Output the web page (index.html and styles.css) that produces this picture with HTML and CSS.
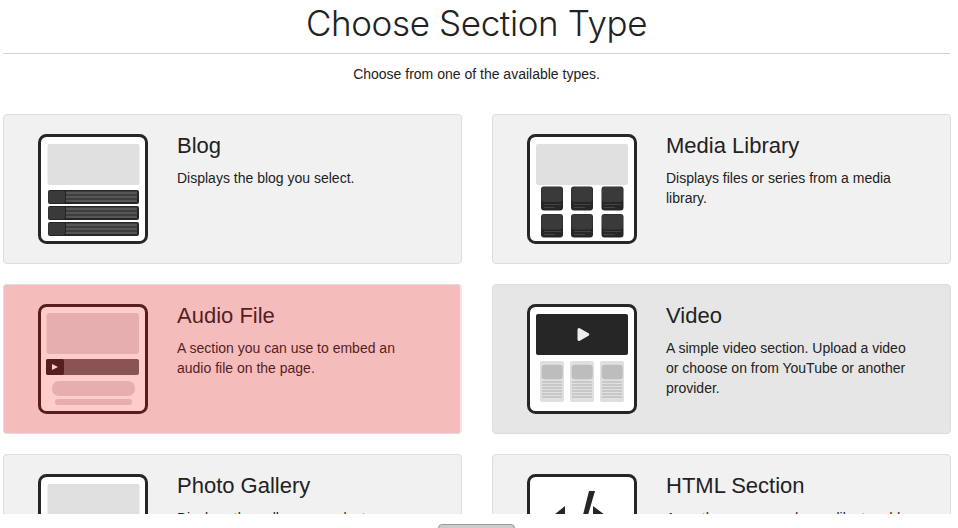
FILE: index.html
```html
<!DOCTYPE html>
<html lang="en">

<head>
    <meta charset="UTF-8">
    <meta name="viewport" content="width=device-width, initial-scale=1.0">
    <title>Choose Section Type</title>
    <link rel="stylesheet" href="styles.css">
</head>

<body>
    <div class="page">
        <h1 class="page-title">Choose Section Type</h1>
        <p class="page-lead">Choose from one of the available types.</p>
        <div class="type-grid">
            <div class="type-card">
                <svg class="type-icon" viewBox="0 0 110 110">
                    <rect class="frame" x="1.5" y="1.5" width="107" height="107" rx="7"/>
                    <rect class="fill-light" x="9.500" y="10" width="92" height="41" rx="2"/>
                    <rect class="fill-dark" x="10" y="56" width="91" height="14" rx="2"/>
                    <rect class="fill-mid" x="10.500" y="57" width="16.500" height="12" rx="2"/>
                    <rect class="fill-line" x="28" y="57.500" width="71" height="3"/>
                    <rect class="fill-line" x="28" y="61.500" width="71" height="3"/>
                    <rect class="fill-line" x="28" y="65.500" width="71" height="2.500"/>
                    <rect class="fill-dark" x="10" y="72" width="91" height="14" rx="2"/>
                    <rect class="fill-mid" x="10.500" y="73" width="16.500" height="12" rx="2"/>
                    <rect class="fill-line" x="28" y="73.500" width="71" height="3"/>
                    <rect class="fill-line" x="28" y="77.500" width="71" height="3"/>
                    <rect class="fill-line" x="28" y="81.500" width="71" height="2.500"/>
                    <rect class="fill-dark" x="10" y="88" width="91" height="14" rx="2"/>
                    <rect class="fill-mid" x="10.500" y="89" width="16.500" height="12" rx="2"/>
                    <rect class="fill-line" x="28" y="89.500" width="71" height="3"/>
                    <rect class="fill-line" x="28" y="93.500" width="71" height="3"/>
                    <rect class="fill-line" x="28" y="97.500" width="71" height="2.500"/>
                </svg>
                <div class="type-text">
                    <h3>Blog</h3>
                    <p>Displays the blog you select.</p>
                </div>
            </div>
            <div class="type-card">
                <svg class="type-icon" viewBox="0 0 110 110">
                    <rect class="frame" x="1.5" y="1.5" width="107" height="107" rx="7"/>
                    <rect class="fill-light" x="9" y="10" width="92" height="41" rx="2"/>
                    <rect class="fill-dark" x="14" y="52.500" width="22" height="24" rx="3"/>
                    <rect class="fill-mid" x="14.500" y="53" width="21" height="15" rx="3"/>
                    <rect class="fill-tile-line" x="17" y="70" width="17" height="1"/>
                    <rect class="fill-tile-line" x="17" y="73" width="11" height="1"/>
                    <rect class="fill-dark" x="44" y="52.500" width="22" height="24" rx="3"/>
                    <rect class="fill-mid" x="44.500" y="53" width="21" height="15" rx="3"/>
                    <rect class="fill-tile-line" x="47" y="70" width="17" height="1"/>
                    <rect class="fill-tile-line" x="47" y="73" width="11" height="1"/>
                    <rect class="fill-dark" x="74.500" y="52.500" width="22" height="24" rx="3"/>
                    <rect class="fill-mid" x="75" y="53" width="21" height="15" rx="3"/>
                    <rect class="fill-tile-line" x="77" y="70" width="17" height="1"/>
                    <rect class="fill-tile-line" x="77" y="73" width="11" height="1"/>
                    <rect class="fill-dark" x="14" y="80" width="22" height="23.500" rx="3"/>
                    <rect class="fill-mid" x="14.500" y="80.500" width="21" height="15" rx="3"/>
                    <rect class="fill-tile-line" x="17" y="97" width="17" height="1"/>
                    <rect class="fill-tile-line" x="17" y="100" width="11" height="1"/>
                    <rect class="fill-dark" x="44" y="80" width="22" height="23.500" rx="3"/>
                    <rect class="fill-mid" x="44.500" y="80.500" width="21" height="15" rx="3"/>
                    <rect class="fill-tile-line" x="47" y="97" width="17" height="1"/>
                    <rect class="fill-tile-line" x="47" y="100" width="11" height="1"/>
                    <rect class="fill-dark" x="74.500" y="80" width="22" height="23.500" rx="3"/>
                    <rect class="fill-mid" x="75" y="80.500" width="21" height="15" rx="3"/>
                    <rect class="fill-tile-line" x="77" y="97" width="17" height="1"/>
                    <rect class="fill-tile-line" x="77" y="100" width="11" height="1"/>
                </svg>
                <div class="type-text">
                    <h3>Media Library</h3>
                    <p>Displays files or series from a media library.</p>
                </div>
            </div>
            <div class="type-card type-card-active">
                <svg class="type-icon" viewBox="0 0 110 110">
                    <rect class="frame" x="1.5" y="1.5" width="107" height="107" rx="7"/>
                    <rect class="fill-light" x="8.500" y="9" width="92.500" height="41" rx="3"/>
                    <rect class="fill-bar" x="8" y="55" width="93" height="16" rx="2"/>
                    <rect class="fill-thumb" x="8" y="55" width="18" height="16" rx="2"/>
                    <path class="fill-play" d="M14 60l6 3-6 3z"/>
                    <rect class="fill-light" x="14" y="77" width="83" height="15" rx="7"/>
                    <rect class="fill-light" x="17" y="95" width="77" height="6" rx="3"/>
                </svg>
                <div class="type-text">
                    <h3>Audio File</h3>
                    <p>A section you can use to embed an audio file on the page.</p>
                </div>
            </div>
            <div class="type-card type-card-hover">
                <svg class="type-icon" viewBox="0 0 110 110">
                    <rect class="frame" x="1.5" y="1.5" width="107" height="107" rx="7"/>
                    <rect class="fill-dark" x="9" y="10" width="92" height="41" rx="2"/>
                    <path class="fill-white" d="M50.500 25.500a1.500 1.500 0 0 1 2.300-1.300l8.700 5a1.500 1.500 0 0 1 0 2.600l-8.700 5a1.500 1.500 0 0 1-2.300-1.300z"/>
                    <rect class="fill-light" x="13" y="57" width="24" height="41" rx="2"/>
                    <rect class="fill-gray" x="14.700" y="60.700" width="21" height="14.600" rx="3"/>
                    <path class="stripes" d="M15 78h20M15 81h20M15 84h20M15 87h20M15 90h20M15 93h20"/>
                    <rect class="fill-light" x="43" y="57" width="24" height="41" rx="2"/>
                    <rect class="fill-gray" x="44.700" y="60.700" width="21" height="14.600" rx="3"/>
                    <path class="stripes" d="M45 78h20M45 81h20M45 84h20M45 87h20M45 90h20M45 93h20"/>
                    <rect class="fill-light" x="73" y="57" width="24" height="41" rx="2"/>
                    <rect class="fill-gray" x="74.700" y="60.700" width="21" height="14.600" rx="3"/>
                    <path class="stripes" d="M75 78h20M75 81h20M75 84h20M75 87h20M75 90h20M75 93h20"/>
                </svg>
                <div class="type-text">
                    <h3>Video</h3>
                    <p>A simple video section. Upload a video or choose on from YouTube or another provider.</p>
                </div>
            </div>
            <div class="type-card">
                <svg class="type-icon" viewBox="0 0 110 110">
                    <rect class="frame" x="1.5" y="1.5" width="107" height="107" rx="7"/>
                    <rect class="fill-light" x="9.500" y="10" width="92" height="41" rx="2"/>
                </svg>
                <div class="type-text">
                    <h3>Photo Gallery</h3>
                    <p>Displays the gallery you select.</p>
                </div>
            </div>
            <div class="type-card">
                <svg class="type-icon" viewBox="0 0 110 110">
                    <rect class="frame" x="1.5" y="1.5" width="107" height="107" rx="7"/>
                    <path class="fill-dark" d="M38 32v11L24 53l14 10v11L12 53zM68 17l-7 24-8 30h-6l9-30 6-24zM66 32l28 21-26 21V63l14-10-16-11z"/>
                </svg>
                <div class="type-text">
                    <h3>HTML Section</h3>
                    <p>Any other source code you like to add.</p>
                </div>
            </div>
        </div>
    </div>
    <div class="page-footer">
        <button class="footer-btn" type="button" aria-label="Close"></button>
    </div>
</body>

</html>
```
FILE: styles.css
```css
html, body {
    height: 100%;
}

body {
    font-family: 'Liberation Sans', Arial, sans-serif;
    margin: 0;
    padding: 0;
    background-color: #fff;
    color: #222;
    overflow: hidden;
}

.page {
    padding: 0 8px 0 3px;
}

.page-title {
    margin: 0;
    height: 53px;
    border-bottom: 1px solid #cbd1d8;
    font-family: 'Inter', 'Liberation Sans', sans-serif;
    font-size: 35px;
    font-weight: 300;
    letter-spacing: -0.38px;
    line-height: 47px;
    text-align: center;
}

.page-lead {
    margin: 0;
    padding-top: 10px;
    height: 50px;
    font-size: 14px;
    line-height: 20px;
    text-align: center;
}

.type-grid {
    display: grid;
    grid-template-columns: 459px 459px;
    column-gap: 30px;
    row-gap: 20px;
}

.type-card {
    display: flex;
    box-sizing: border-box;
    height: 150px;
    padding: 19px 20px 0 34px;
    border: 1px solid #ddd;
    border-radius: 4px;
    background-color: #f1f1f1;
}

.type-card-hover {
    background-color: #e6e6e6;
}

.type-card-active {
    background-color: #f5bcbc;
    color: #561e1e;
    border-right: 2px solid #f3e5e5;
}

.type-icon {
    flex: none;
    width: 110px;
    height: 110px;
}

.type-text {
    padding-left: 29px;
}

.type-text h3 {
    margin: 0;
    font-size: 22px;
    font-weight: 400;
    line-height: 24px;
}

.type-text p {
    max-width: 250px;
    margin: 10px 0 0;
    font-size: 14px;
    line-height: 20px;
}

.frame {
    fill: #fff;
    stroke: #262626;
    stroke-width: 3;
}

.fill-light {
    fill: #e0e0e0;
}

.fill-dark {
    fill: #262626;
}

.fill-mid {
    fill: #3a3a3a;
}

.fill-line {
    fill: #565656;
}

.fill-tile-line {
    fill: #444;
}

.fill-gray {
    fill: #bdbdbd;
}

.fill-white {
    fill: #eee;
}

.stripes {
    fill: none;
    stroke: #c0c0c0;
    stroke-width: 1.5;
}

.type-card-active .frame {
    fill: #fcc;
    stroke: #561e1e;
}

.type-card-active .fill-light {
    fill: #e6aeae;
}

.fill-bar {
    fill: #8b5454;
}

.fill-thumb {
    fill: #561e1e;
}

.fill-play {
    fill: #fcc;
}

.page-footer {
    position: fixed;
    left: 0;
    right: 0;
    bottom: 0;
    height: 14px;
    background-color: #fff;
}

.footer-btn {
    display: block;
    box-sizing: border-box;
    width: 77px;
    height: 30px;
    margin: 10px 0 0 438px;
    border: 1px solid #999;
    border-radius: 4px;
    background-color: #ccc;
}
```
